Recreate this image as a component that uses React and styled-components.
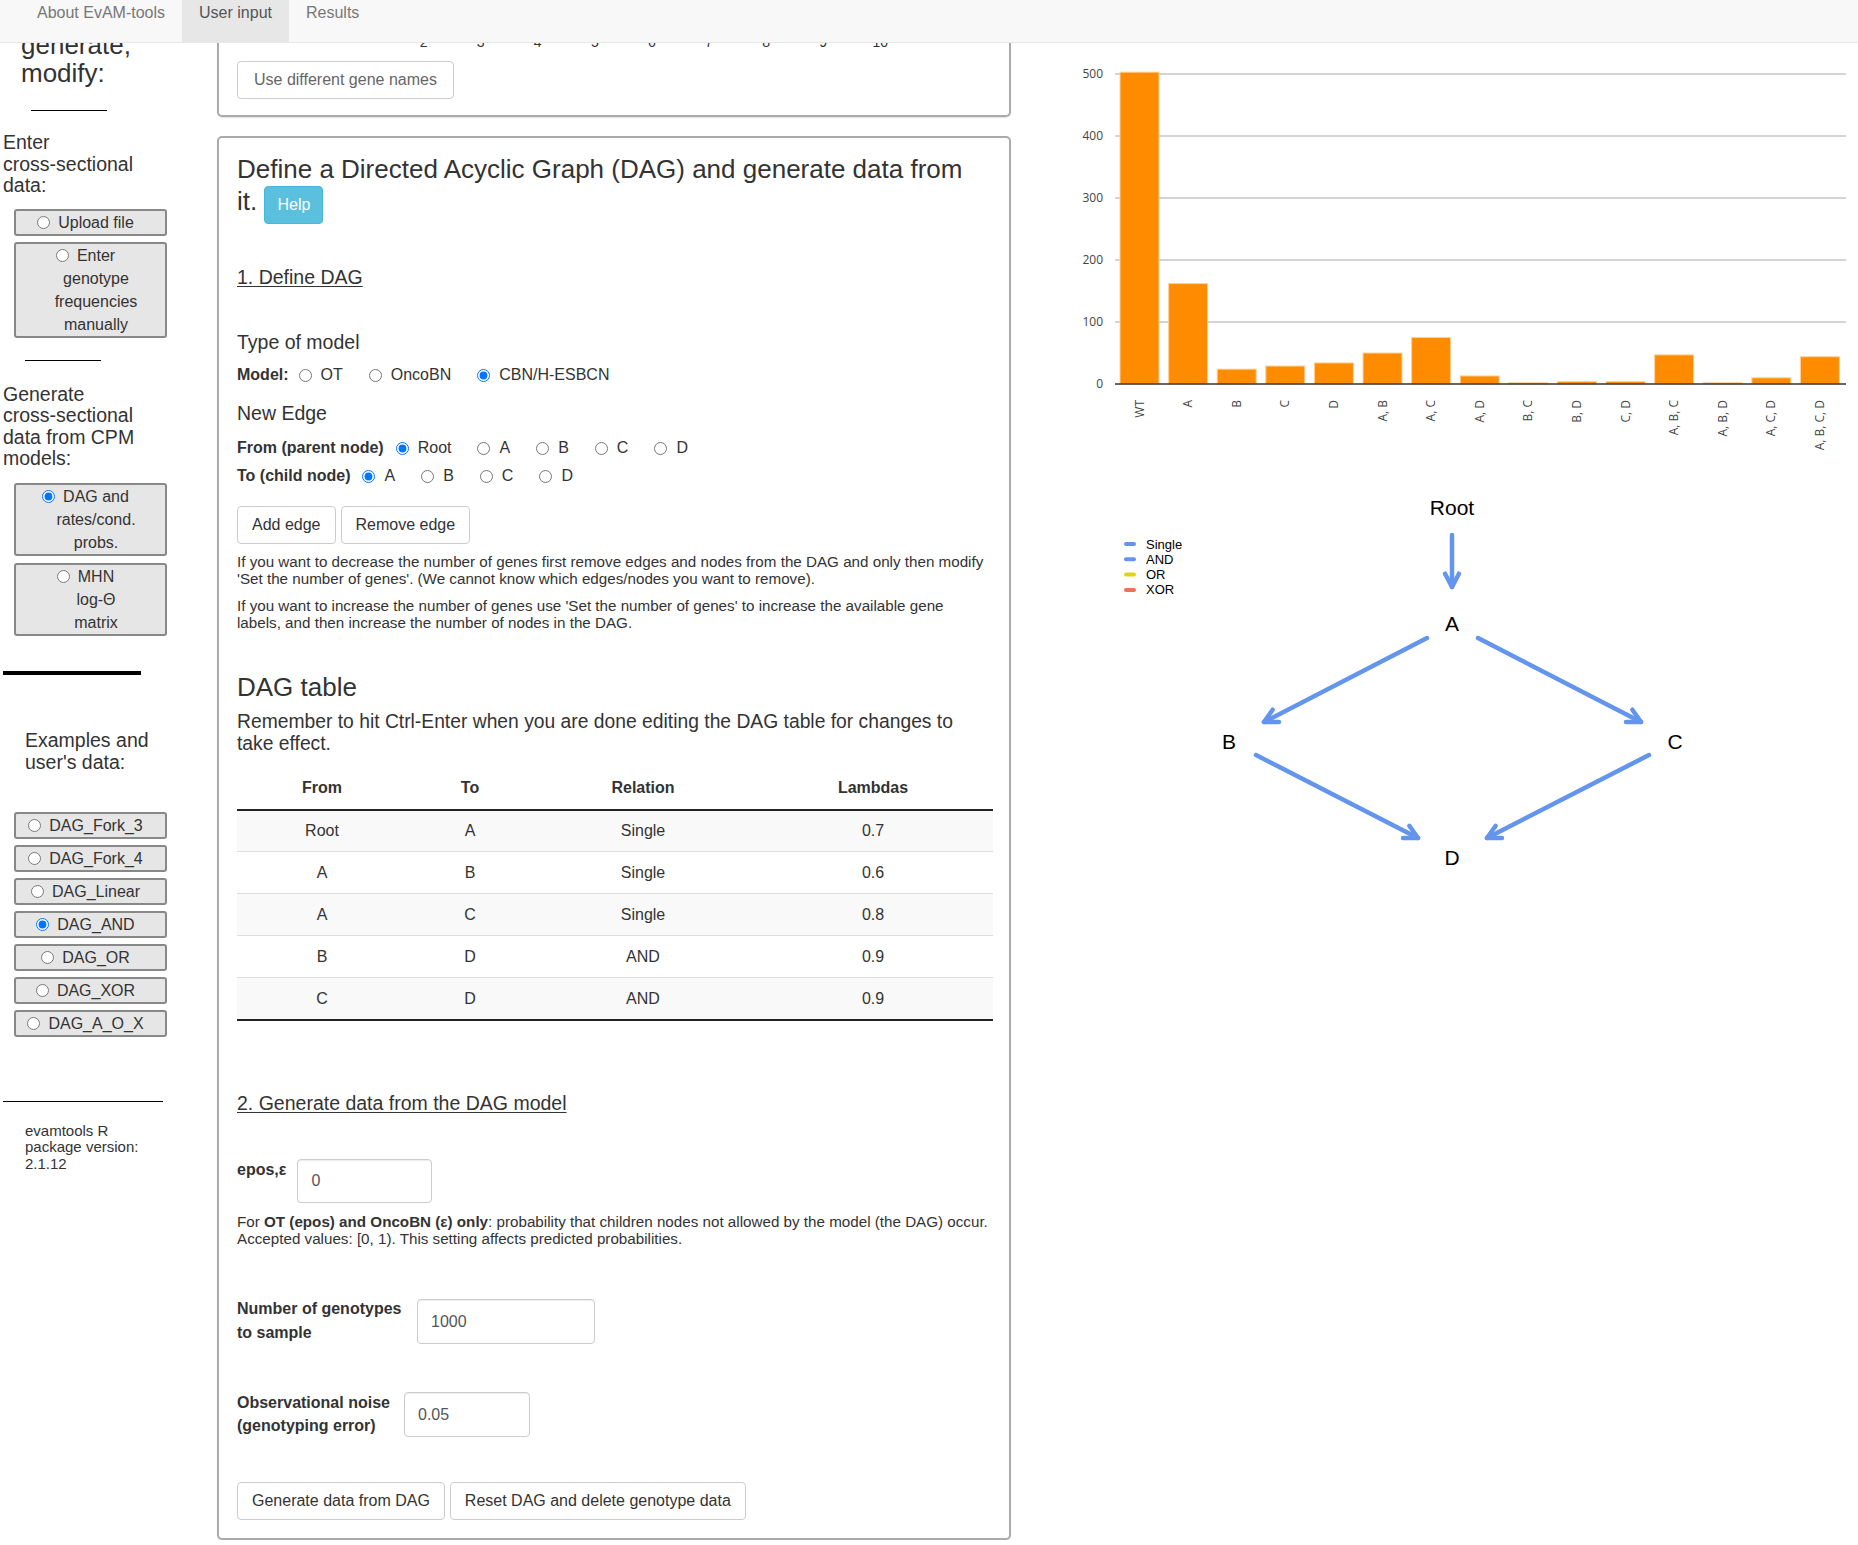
import React from "react";
import styled, { createGlobalStyle } from "styled-components";

const GlobalStyle = createGlobalStyle`
  * { box-sizing: border-box; }
  html, body { margin: 0; padding: 0; background: #fff; overflow: hidden; }
  body {
    font-family: "Liberation Sans", Arial, Helvetica, sans-serif;
    font-size: 16px;
    color: #333;
  }
`;

// Navbar (fixed, sits over the scrolled page)
const Navbar = styled.nav`
  position: fixed;
  top: 0;
  left: 0;
  right: 0;
  height: 43px;
  display: flex;
  padding-left: 20px;
  background: #f8f8f8;
  border-bottom: 1px solid #e7e7e7;
  z-index: 10;
`;

const NavTab = styled.div`
  height: 42px;
  padding: 2px 17px 0;
  font-size: 16px;
  line-height: 22px;
  color: ${(p) => (p.$active ? "#555" : "#777")};
  background: ${(p) => (p.$active ? "#e7e7e7" : "transparent")};
`;

const Page = styled.div`
  display: flex;
  align-items: flex-start;
  width: 1858px;
`;

// Sidebar
const Sidebar = styled.aside`
  flex: none;
  width: 170px;
  padding: 31px 0 0 3px;
`;

const SideHeading = styled.h3`
  margin: 0 0 0 18px;
  font-size: 26px;
  line-height: 28px;
  font-weight: normal;
`;

const SideText = styled.p`
  margin: ${(p) => p.$mt}px 0 0 ${(p) => p.$indent || 0}px;
  width: ${(p) => p.$w || 164}px;
  font-size: ${(p) => p.$size || 19.5}px;
  line-height: ${(p) => p.$lh || 21.5}px;
`;

const NoWrap = styled.span`
  white-space: nowrap;
`;

const Rule = styled.hr`
  height: 0;
  border: none;
  border-top: ${(p) => p.$thick || 1}px solid #000;
  width: ${(p) => p.$w}px;
  margin: ${(p) => p.$mt}px 0 0 ${(p) => p.$ml || 0}px;
`;

const OptionBox = styled.label`
  display: block;
  width: 153px;
  margin: ${(p) => p.$mt}px 0 0 11px;
  padding-left: 11px;
  border: 2px solid #888;
  border-radius: 3px;
  background: #e6e6e6;
  text-align: center;
  font-size: 16px;
  line-height: 23px;
`;

const OptionText = styled.span`
  display: inline-block;
  max-width: ${(p) => (p.$max ? `${p.$max}px` : "none")};
  white-space: ${(p) => (p.$max ? "normal" : "nowrap")};
`;

const HangingRadio = styled.input.attrs({ type: "radio" })`
  width: 13px;
  height: 13px;
  margin: 0 8px 0 -21px;
  vertical-align: -1px;
`;

// Main column
const Main = styled.main`
  flex: none;
  width: 794px;
  margin-left: 47px;
`;

const Card = styled.section`
  margin-top: ${(p) => p.$mt || 0}px;
  padding: ${(p) => p.$pad};
  border: 2px solid #aaa;
  border-radius: 5px;
  box-shadow: 0 1px 1px rgba(0, 0, 0, 0.12);
`;

const TickRow = styled.div`
  display: flex;
  padding-left: 158px;
  font-size: 14px;
  line-height: 20px;
`;

const Tick = styled.span`
  width: 57.1px;
  text-align: center;
`;

const Title = styled.h3`
  margin: 0;
  font-size: 26px;
  line-height: 32px;
  font-weight: normal;
`;

const HelpButton = styled.span`
  display: inline-block;
  padding: 7px 12px;
  font-size: 16px;
  line-height: 22px;
  color: #fff;
  background: #5bc0de;
  border: 1px solid #46b8da;
  border-radius: 4px;
`;

const SectionLink = styled.h4`
  margin: ${(p) => p.$mt}px 0 0;
  font-size: 19.5px;
  line-height: 22px;
  font-weight: normal;
  text-decoration: ${(p) => (p.$underline ? "underline" : "none")};
  text-underline-offset: 2px;
`;

const SubHeading = styled.h3`
  margin: ${(p) => p.$mt}px 0 0;
  font-size: 26px;
  line-height: 30px;
  font-weight: normal;
`;

const Lead = styled.p`
  margin: ${(p) => p.$mt}px 0 0;
  font-size: 19.3px;
  line-height: 22px;
`;

const Note = styled.p`
  max-width: 752px;
  margin: ${(p) => p.$mt}px 0 0;
  font-size: 15.2px;
  line-height: ${(p) => p.$lh || 16.6}px;
`;

const FieldRow = styled.div`
  display: flex;
  align-items: center;
  margin-top: ${(p) => p.$mt}px;
  font-size: 16px;
  line-height: 22px;
`;

const FieldLabel = styled.span`
  font-weight: bold;
  margin-right: ${(p) => p.$gap || 10}px;
`;

const Choice = styled.label`
  display: inline-flex;
  align-items: center;
  margin-right: 26px;
`;

const ChoiceRadio = styled.input.attrs({ type: "radio" })`
  width: 13px;
  height: 13px;
  margin: 0 9px 0 0;
`;

const ButtonRow = styled.div`
  display: flex;
  gap: 5px;
  margin-top: ${(p) => p.$mt}px;
`;

const Button = styled.button`
  height: 38px;
  padding: 0 ${(p) => p.$pad || 14}px;
  font-family: inherit;
  font-size: 16px;
  color: ${(p) => (p.$muted ? "#666" : "#333")};
  background: #fff;
  border: 1px solid #ccc;
  border-radius: 4px;
`;

const DagTable = styled.table`
  width: 756px;
  margin-top: 12px;
  border-collapse: separate;
  border-spacing: 0;
  font-size: 16px;
  text-align: center;

  th {
    height: 44px;
    padding: 0;
    font-weight: bold;
    border-bottom: 2px solid #222;
  }
  td {
    padding: 0;
    line-height: 40px;
  }
  tbody tr + tr td {
    line-height: 41px;
    border-top: 1px solid #ddd;
  }
  tbody tr:nth-child(odd) td {
    background: #f9f9f9;
  }
  tbody tr:last-child td {
    border-bottom: 2px solid #222;
  }
`;

const InputRow = styled.div`
  display: flex;
  align-items: flex-start;
  margin-top: ${(p) => p.$mt}px;
`;

const InputLabel = styled.label`
  flex: none;
  width: ${(p) => (p.$w ? `${p.$w}px` : "auto")};
  margin-right: ${(p) => p.$gap || 12}px;
  font-weight: bold;
  font-size: 16px;
  line-height: ${(p) => p.$lh || 22}px;
`;

const TextInput = styled.input`
  width: ${(p) => p.$w}px;
  height: ${(p) => p.$h || 45}px;
  margin-top: ${(p) => p.$mt || 0}px;
  padding: 0 13px;
  font-family: inherit;
  font-size: 16px;
  color: #555;
  border: 1px solid #ccc;
  border-radius: 4px;
  box-shadow: inset 0 1px 1px rgba(0, 0, 0, 0.075);
`;

// Right column
const Results = styled.div`
  flex: 1;
  padding: 50px 0 0 49px;
`;

const ChartSvg = styled.svg`
  display: block;
  font-family: "Open Sans", "DejaVu Sans", sans-serif;
  font-size: 12px;
  fill: #444;
`;

const DagSvg = styled.svg`
  display: block;
  margin-left: 40px;
  font-family: "Liberation Sans", Arial, sans-serif;
`;

const BARS = [
  ["WT", 503], ["A", 162], ["B", 24], ["C", 29], ["D", 34],
  ["A, B", 50], ["A, C", 75], ["A, D", 13], ["B, C", 2], ["B, D", 4],
  ["C, D", 4], ["A, B, C", 47], ["A, B, D", 2], ["A, C, D", 10], ["A, B, C, D", 44],
];

function GenotypeChart() {
  const y = (v) => 334 - v * 0.62;
  return (
    <ChartSvg width="798" height="420">
      {[100, 200, 300, 400, 500].map((v) => (
        <line key={v} x1="55" x2="786" y1={y(v)} y2={y(v)} stroke="#aaa" strokeWidth="1" />
      ))}
      {[0, 100, 200, 300, 400, 500].map((v) => (
        <text key={v} x="43" y={y(v) + 4} textAnchor="end">{v}</text>
      ))}
      {BARS.map(([label, v], i) => {
        const x = 60 + i * 48.6;
        return (
          <g key={label}>
            <rect x={x} y={y(v)} width="39" height={v * 0.62} fill="#ff8c00" stroke="#ffd29a" strokeWidth="1" />
            <text transform={`translate(${x + 19.5} 350) rotate(-90)`} textAnchor="end" dy="4">{label}</text>
          </g>
        );
      })}
      <line x1="55" x2="786" y1={y(0)} y2={y(0)} stroke="#333" strokeWidth="1.5" />
    </ChartSvg>
  );
}

const EDGES = [
  [352, 65, 352, 117],
  [327, 168, 164, 252],
  [378, 168, 541, 252],
  [156, 285, 318, 368],
  [549, 285, 387, 368],
];

const NODES = [
  ["Root", 352, 45],
  ["A", 352, 161],
  ["B", 129, 279],
  ["C", 575, 279],
  ["D", 352, 395],
];

const LEGEND = [
  ["Single", "#6495ed"],
  ["AND", "#6495ed"],
  ["OR", "#e3d21a"],
  ["XOR", "#f0705a"],
];

function Arrow({ x1, y1, x2, y2 }) {
  const a = Math.atan2(y2 - y1, x2 - x1);
  const len = 15;
  const spread = 0.48;
  const w1 = [x2 - len * Math.cos(a - spread), y2 - len * Math.sin(a - spread)];
  const w2 = [x2 - len * Math.cos(a + spread), y2 - len * Math.sin(a + spread)];
  return (
    <g stroke="#6495ed" strokeWidth="4.5" strokeLinecap="round" fill="none">
      <line x1={x1} y1={y1} x2={x2} y2={y2} />
      <polyline points={`${w1[0]},${w1[1]} ${x2},${y2} ${w2[0]},${w2[1]}`} strokeLinejoin="round" />
    </g>
  );
}

function DagPlot() {
  return (
    <DagSvg width="700" height="420">
      {LEGEND.map(([label, color], i) => (
        <g key={label}>
          <line x1="26" x2="34" y1={74 + i * 15.3} y2={74 + i * 15.3} stroke={color} strokeWidth="4" strokeLinecap="round" />
          <text x="46" y={78.5 + i * 15.3} fontSize="13" fill="#000">{label}</text>
        </g>
      ))}
      {EDGES.map(([x1, y1, x2, y2], i) => (
        <Arrow key={i} x1={x1} y1={y1} x2={x2} y2={y2} />
      ))}
      {NODES.map(([label, x, y]) => (
        <text key={label} x={x} y={y} fontSize="21" textAnchor="middle" fill="#000">{label}</text>
      ))}
    </DagSvg>
  );
}

const DAG_ROWS = [
  ["Root", "A", "Single", "0.7"],
  ["A", "B", "Single", "0.6"],
  ["A", "C", "Single", "0.8"],
  ["B", "D", "AND", "0.9"],
  ["C", "D", "AND", "0.9"],
];

const EXAMPLES = ["DAG_Fork_3", "DAG_Fork_4", "DAG_Linear", "DAG_AND", "DAG_OR", "DAG_XOR", "DAG_A_O_X"];

function Choices({ options, checked }) {
  return options.map((o) => (
    <Choice key={o}>
      <ChoiceRadio defaultChecked={o === checked} />
      {o}
    </Choice>
  ));
}

export default function App() {
  return (
    <>
      <GlobalStyle />
      <Navbar>
        <NavTab>About EvAM-tools</NavTab>
        <NavTab $active>User input</NavTab>
        <NavTab>Results</NavTab>
      </Navbar>

      <Page>
        <Sidebar>
          <SideHeading>generate, modify:</SideHeading>
          <Rule $w={76} $ml={28} $mt={23} />
          <SideText $mt={21}>
            Enter <NoWrap>cross-sectional</NoWrap> data:
          </SideText>
          <OptionBox $mt={12}>
            <OptionText $max={86}><HangingRadio />Upload file</OptionText>
          </OptionBox>
          <OptionBox $mt={6}>
            <OptionText $max={86}><HangingRadio />Enter genotype frequencies manually</OptionText>
          </OptionBox>
          <Rule $w={76} $ml={22} $mt={22} />
          <SideText $mt={23}>
            Generate <NoWrap>cross-sectional</NoWrap> data from CPM models:
          </SideText>
          <OptionBox $mt={13}>
            <OptionText $max={86}><HangingRadio defaultChecked />DAG and rates/cond. probs.</OptionText>
          </OptionBox>
          <OptionBox $mt={7}>
            <OptionText $max={70}><HangingRadio />MHN <NoWrap>log-Θ</NoWrap> matrix</OptionText>
          </OptionBox>
          <Rule $w={138} $thick={4} $mt={35} />
          <SideText $mt={54} $indent={22} $w={142} $lh={22}>Examples and user's data:</SideText>
          {EXAMPLES.map((name, i) => (
            <OptionBox key={name} $mt={i === 0 ? 39 : 6}>
              <OptionText><HangingRadio defaultChecked={name === "DAG_AND"} />{name}</OptionText>
            </OptionBox>
          ))}
          <Rule $w={160} $mt={64} />
          <SideText $mt={21} $indent={22} $w={130} $size={15} $lh={16.5}>
            evamtools R package version: 2.1.12
          </SideText>
        </Sidebar>

        <Main>
          <Card $pad="30px 16px 16px 18px">
            <TickRow>
              {[2, 3, 4, 5, 6, 7, 8, 9, 10].map((n) => (
                <Tick key={n}>{n}</Tick>
              ))}
            </TickRow>
            <ButtonRow $mt={9}>
              <Button $muted $pad={16}>Use different gene names</Button>
            </ButtonRow>
          </Card>

          <Card $mt={19} $pad="15px 16px 18px 18px">
            <Title>
              Define a Directed Acyclic Graph (DAG) and generate data from{" "}
              <NoWrap>
                it. <HelpButton>Help</HelpButton>
              </NoWrap>
            </Title>
            <SectionLink $mt={42} $underline>1. Define DAG</SectionLink>
            <SectionLink $mt={43}>Type of model</SectionLink>
            <FieldRow $mt={11}>
              <FieldLabel $gap={10}>Model:</FieldLabel>
              <Choices options={["OT", "OncoBN", "CBN/H-ESBCN"]} checked="CBN/H-ESBCN" />
            </FieldRow>
            <SectionLink $mt={16}>New Edge</SectionLink>
            <FieldRow $mt={13}>
              <FieldLabel $gap={12}>From (parent node)</FieldLabel>
              <Choices options={["Root", "A", "B", "C", "D"]} checked="Root" />
            </FieldRow>
            <FieldRow $mt={6}>
              <FieldLabel $gap={12}>To (child node)</FieldLabel>
              <Choices options={["A", "B", "C", "D"]} checked="A" />
            </FieldRow>
            <ButtonRow $mt={19}>
              <Button>Add edge</Button>
              <Button>Remove edge</Button>
            </ButtonRow>
            <Note $mt={10}>
              If you want to decrease the number of genes first remove edges and nodes from the DAG and only then modify
              'Set the number of genes'. (We cannot know which edges/nodes you want to remove).
            </Note>
            <Note $mt={11}>
              If you want to increase the number of genes use 'Set the number of genes' to increase the available gene
              labels, and then increase the number of nodes in the DAG.
            </Note>

            <SubHeading $mt={41}>DAG table</SubHeading>
            <Lead $mt={9}>Remember to hit Ctrl-Enter when you are done editing the DAG table for changes to take effect.</Lead>
            <DagTable>
              <colgroup>
                <col style={{ width: 170 }} />
                <col style={{ width: 126 }} />
                <col style={{ width: 220 }} />
                <col style={{ width: 240 }} />
              </colgroup>
              <thead>
                <tr>
                  <th>From</th>
                  <th>To</th>
                  <th>Relation</th>
                  <th>Lambdas</th>
                </tr>
              </thead>
              <tbody>
                {DAG_ROWS.map((r, i) => (
                  <tr key={i}>
                    {r.map((c, j) => (
                      <td key={j}>{c}</td>
                    ))}
                  </tr>
                ))}
              </tbody>
            </DagTable>

            <SectionLink $mt={71} $underline>2. Generate data from the DAG model</SectionLink>
            <InputRow $mt={45}>
              <InputLabel $gap={11}>epos,ε</InputLabel>
              <TextInput $w={135} $h={44} defaultValue="0" />
            </InputRow>
            <Note $mt={10} $lh={17}>
              For <b>OT (epos) and OncoBN (ε) only</b>: probability that children nodes not allowed by the model (the DAG)
              occur. Accepted values: [0, 1). This setting affects predicted probabilities.
            </Note>
            <InputRow $mt={50}>
              <InputLabel $w={168} $lh={24}>Number of genotypes to sample</InputLabel>
              <TextInput $w={178} $mt={2} defaultValue="1000" />
            </InputRow>
            <InputRow $mt={46}>
              <InputLabel $w={155} $lh={23}>Observational noise (genotyping error)</InputLabel>
              <TextInput $w={126} $mt={1} defaultValue="0.05" />
            </InputRow>
            <ButtonRow $mt={45}>
              <Button>Generate data from DAG</Button>
              <Button>Reset DAG and delete genotype data</Button>
            </ButtonRow>
          </Card>
        </Main>

        <Results>
          <GenotypeChart />
          <DagPlot />
        </Results>
      </Page>
    </>
  );
}
